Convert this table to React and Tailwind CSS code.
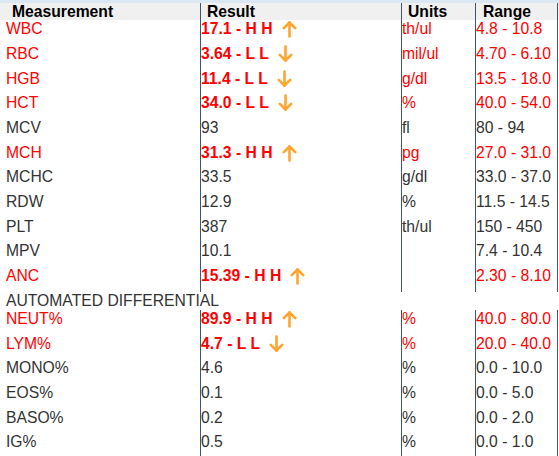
import React from "react";

const top = [
  { m: "WBC", r: "17.1 - H H", u: "th/ul", g: "4.8 - 10.8", f: "up" },
  { m: "RBC", r: "3.64 - L L", u: "mil/ul", g: "4.70 - 6.10", f: "down" },
  { m: "HGB", r: "11.4 - L L", u: "g/dl", g: "13.5 - 18.0", f: "down" },
  { m: "HCT", r: "34.0 - L L", u: "%", g: "40.0 - 54.0", f: "down" },
  { m: "MCV", r: "93", u: "fl", g: "80 - 94" },
  { m: "MCH", r: "31.3 - H H", u: "pg", g: "27.0 - 31.0", f: "up" },
  { m: "MCHC", r: "33.5", u: "g/dl", g: "33.0 - 37.0" },
  { m: "RDW", r: "12.9", u: "%", g: "11.5 - 14.5" },
  { m: "PLT", r: "387", u: "th/ul", g: "150 - 450" },
  { m: "MPV", r: "10.1", u: "", g: "7.4 - 10.4" },
  { m: "ANC", r: "15.39 - H H", u: "", g: "2.30 - 8.10", f: "up" },
];

const diff = [
  { m: "NEUT%", r: "89.9 - H H", u: "%", g: "40.0 - 80.0", f: "up" },
  { m: "LYM%", r: "4.7 - L L", u: "%", g: "20.0 - 40.0", f: "down" },
  { m: "MONO%", r: "4.6", u: "%", g: "0.0 - 10.0" },
  { m: "EOS%", r: "0.1", u: "%", g: "0.0 - 5.0" },
  { m: "BASO%", r: "0.2", u: "%", g: "0.0 - 2.0" },
  { m: "IG%", r: "0.5", u: "%", g: "0.0 - 1.0" },
];

function Arrow({ dir }) {
  return (
    <svg
      width="15"
      height="18"
      viewBox="0 0 15 18"
      className="ml-[9px] shrink-0"
      fill="none"
      stroke="#ffa42e"
      strokeWidth="2.6"
      strokeLinecap="round"
      strokeLinejoin="round"
    >
      {dir === "up" ? (
        <>
          <path d="M7.5 2.5V16.5" />
          <path d="M1.8 8.2L7.5 2.5L13.2 8.2" />
        </>
      ) : (
        <>
          <path d="M7.5 1.5V15.5" />
          <path d="M1.8 9.8L7.5 15.5L13.2 9.8" />
        </>
      )}
    </svg>
  );
}

function Row({ d }) {
  const abn = !!d.f;
  const c = abn ? "text-[#ff0000]" : "text-[#333333]";
  return (
    <div className="grid grid-cols-[200px_201px_74px_83px] h-[24.7px] leading-[18px]">
      <div className={`pl-[6px] ${c}`}>{d.m}</div>
      <div className={`flex items-start border-l border-[#44546a] ${c} ${abn ? "font-bold" : ""}`}>
        <span>{d.r}</span>
        {d.f && <Arrow dir={d.f} />}
      </div>
      <div className={`border-l border-[#44546a] ${c}`}>{d.u}</div>
      <div className={`border-l border-r border-[#44546a] ${c}`}>{d.g}</div>
    </div>
  );
}

export default function App() {
  return (
    <div
      className="w-[559px] h-[456px] overflow-hidden bg-white text-[15.7px]"
      style={{ fontFamily: '"Liberation Sans", Arial, sans-serif' }}
    >
      <div className="h-[3px] bg-[#dce7f4]" />
      <div className="grid grid-cols-[200px_201px_74px_83px] h-[17.3px] leading-[17.3px] bg-[#f0f0f0] font-bold text-black">
        <div className="pl-[12px]">Measurement</div>
        <div className="pl-[6px] border-l border-[#44546a]">Result</div>
        <div className="pl-[6px] border-l border-[#44546a]">Units</div>
        <div className="pl-[7px] border-l border-r border-[#44546a]">Range</div>
      </div>
      {top.map((d) => (
        <Row key={d.m} d={d} />
      ))}
      <div className="h-[18px] leading-[18px] pl-[6px] text-[#333333]">AUTOMATED DIFFERENTIAL</div>
      {diff.map((d) => (
        <Row key={d.m} d={d} />
      ))}
    </div>
  );
}
